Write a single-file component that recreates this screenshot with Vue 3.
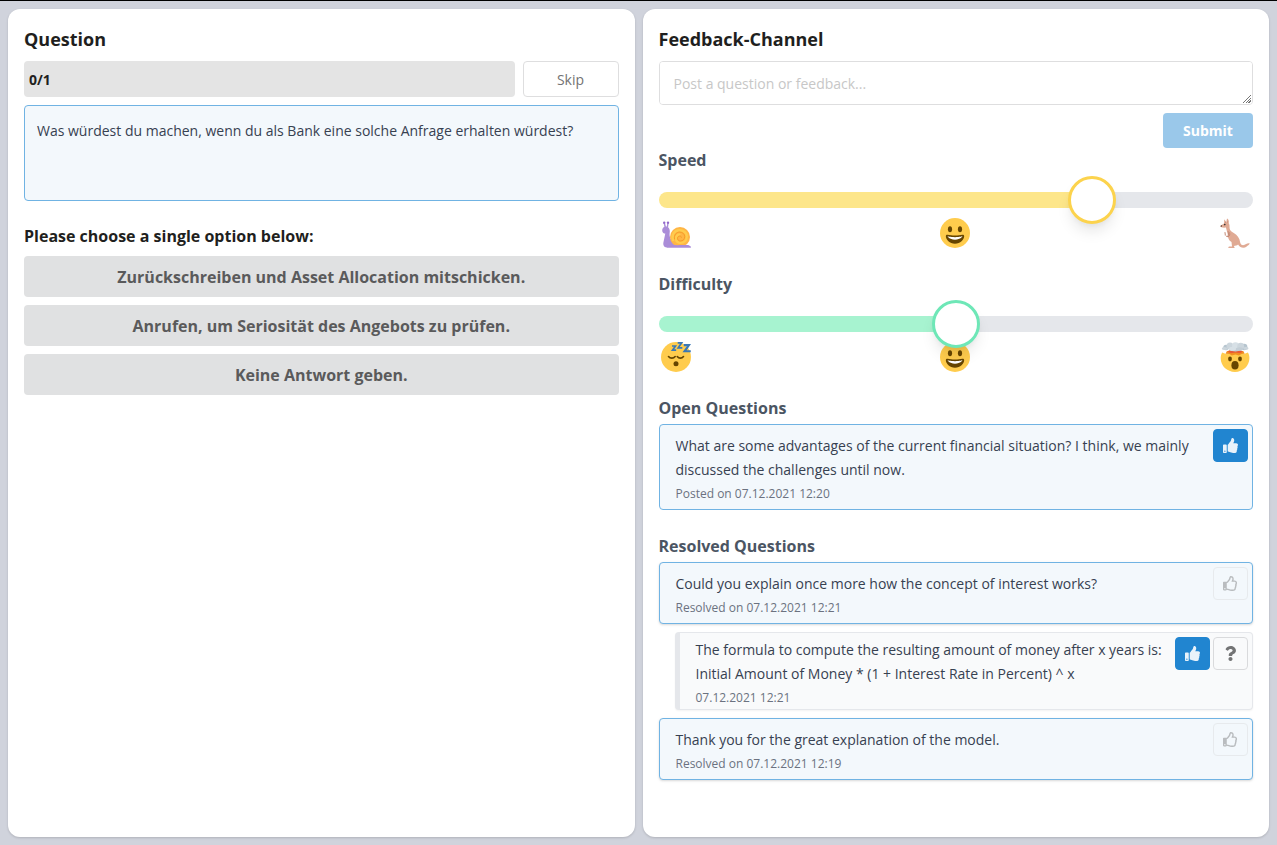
<script setup>
import { ref, computed } from 'vue'

const options = [
  'Zurückschreiben und Asset Allocation mitschicken.',
  'Anrufen, um Seriosität des Angebots zu prüfen.',
  'Keine Antwort geben.',
]

const feedback = ref('')
const speed = ref(75)
const difficulty = ref(50)
const speedStyle = computed(() => ({ '--ratio': speed.value / 100 }))
const difficultyStyle = computed(() => ({ '--ratio': difficulty.value / 100 }))

const thumbSolid =
  'M104 224H24c-13.255 0-24 10.745-24 24v240c0 13.255 10.745 24 24 24h80c13.255 0 24-10.745 24-24V248c0-13.255-10.745-24-24-24zM64 472c-13.255 0-24-10.745-24-24s10.745-24 24-24 24 10.745 24 24-10.745 24-24 24zM384 81.452c0 42.416-25.97 66.208-33.277 94.548h101.723c33.397 0 59.397 27.746 59.553 58.098.084 17.938-7.546 37.249-19.439 49.197l-.11.11c9.836 23.337 8.237 56.037-9.308 79.469 8.681 25.895-.069 57.704-16.382 74.757 4.298 17.598 2.244 32.575-6.148 44.632C440.202 511.587 389.616 512 346.839 512l-2.845-.001c-48.287-.017-87.806-17.598-119.56-31.725-15.957-7.099-36.821-15.887-52.651-16.178-6.54-.12-11.783-5.457-11.783-11.998v-213.77c0-3.2 1.282-6.271 3.558-8.521 39.614-39.144 56.648-80.587 89.117-113.111 14.804-14.832 20.188-37.236 25.393-58.902C282.515 39.293 291.817 0 312 0c24 0 72 8 72 81.452z'
const thumbOutline =
  'M466.27 286.69C475.04 271.84 480 256 480 236.85c0-44.015-37.218-85.58-85.82-85.58H357.7c4.92-12.81 8.85-28.13 8.85-46.54C366.55 31.936 328.86 0 271.28 0c-61.607 0-58.093 94.933-71.76 108.6-22.747 22.747-49.615 66.447-68.76 83.4H32c-17.673 0-32 14.327-32 32v240c0 17.673 14.327 32 32 32h64c14.893 0 27.408-10.174 30.978-23.95 44.509 1.001 75.06 39.94 177.802 39.94 7.22 0 15.22.01 22.22.01 77.117 0 111.986-39.423 112.94-95.33 13.319-18.425 20.299-43.122 17.34-66.99 9.854-18.452 13.664-40.343 8.99-62.99zm-61.75 53.83c12.56 21.13 1.26 49.41-13.94 57.57 7.7 48.78-17.608 65.9-53.12 65.9h-37.82c-71.639 0-118.029-37.82-171.64-37.82V240h10.92c28.36 0 67.98-70.89 94.54-97.46 28.36-28.36 18.91-75.63 37.82-94.54 47.27 0 47.27 32.98 47.27 56.73 0 39.17-28.36 56.72-28.36 94.54h103.99c21.11 0 37.73 18.91 37.82 37.82.09 18.9-12.82 37.81-22.27 37.81 13.489 14.555 16.371 45.236-5.21 65.62zM88 432c0 13.255-10.745 24-24 24s-24-10.745-24-24 10.745-24 24-24 24 10.745 24 24z'
const questionMark =
  'M202.021 0C122.202 0 70.503 32.703 29.914 91.026c-7.363 10.58-5.093 25.086 5.178 32.874l43.138 32.709c10.373 7.865 25.132 6.026 33.253-4.148 25.049-31.381 43.63-49.449 82.757-49.449 30.764 0 68.816 19.799 68.816 49.631 0 22.552-18.617 34.134-48.993 51.164-35.423 19.86-82.299 44.576-82.299 106.405V320c0 13.255 10.745 24 24 24h72.471c13.255 0 24-10.745 24-24v-5.773c0-42.86 125.268-44.645 125.268-160.627C377.504 66.256 286.902 0 202.021 0zM192 373.459c-38.196 0-69.271 31.075-69.271 69.271 0 38.195 31.075 69.27 69.271 69.27s69.271-31.075 69.271-69.271-31.075-69.27-69.271-69.27z'
</script>

<template>
  <div class="page">
    <main class="panel">
      <h1 class="title">Question</h1>
      <div class="status">
        <div class="progress">0/1</div>
        <button type="button" class="skip">Skip</button>
      </div>
      <div class="prompt">
        Was würdest du machen, wenn du als Bank eine solche Anfrage erhalten würdest?
      </div>
      <h2 class="choose">Please choose a single option below:</h2>
      <div class="options">
        <button v-for="option in options" :key="option" type="button" class="option">
          {{ option }}
        </button>
      </div>
    </main>

    <aside class="panel">
      <h1 class="title">Feedback-Channel</h1>
      <form class="form" @submit.prevent>
        <textarea
          v-model="feedback"
          class="field"
          rows="1"
          aria-label="Feedback"
          placeholder="Post a question or feedback..."
        ></textarea>
        <button type="submit" class="submit" :disabled="!feedback">Submit</button>
      </form>

      <section class="rating">
        <label class="heading" for="speed">Speed</label>
        <input id="speed" v-model.number="speed" class="range yellow" type="range" min="0" max="100" :style="speedStyle" />
        <div class="emojis">
          <svg class="emoji" viewBox="0 0 30 30" aria-hidden="true">
            <path fill="#aa8dd8" d="M1.2 12.2c0-2 1.300-3 2.200-3.500L2.700 5.600h1.400l.8 2.900h.9l.4-2.900h1.400l-.5 3.700c1.700 1.300 2 3.600 1.500 6.300-.6 3.800 2.700 10.300 8 10.900l9.500.4c2 .3 3.400 1.100 3.800 2.500H5.700c-2.700 0-3.900-2.300-3.200-5.300l1.800-8.500c-1.800 0-3.100-1.200-3.100-3.400z" />
            <circle cx="3.200" cy="4.800" r="1.200" fill="#9268ca" />
            <circle cx="7" cy="4.800" r="1.200" fill="#9268ca" />
            <circle cx="19" cy="19" r="10" fill="#ffb545" />
            <path fill="none" stroke="#ffcc4d" stroke-width="2.400" stroke-linecap="round" d="M11.900 22c-1.500-5.500 1.900-9.800 6.800-9.800 4.300 0 7.100 2.900 7.100 6.300 0 3.900-2.900 6.300-6.100 6.300-3 0-4.900-2-4.900-4.300 0-2.300 1.700-3.800 3.600-3.800" />
            <path fill="none" stroke="#f79d27" stroke-width="1" stroke-linecap="round" d="M13.500 21c-.8-3.900 1.700-6.900 5.200-6.900 3 0 5 2 5 4.600 0 2.700-2 4.300-4.200 4.300-1.900 0-3-1.300-3-2.700 0-1.400 1.100-2.300 2.300-2.300 1 0 1.600.6 1.600 1.400" />
            <path fill="#aa8dd8" d="M5 23.500c4 4 10 3.800 16 3.500 5-.1 8.700.5 9 2.500H6z" />
          </svg>
          <svg class="emoji" viewBox="0 0 36 36" aria-hidden="true">
            <circle cx="18" cy="18" r="18" fill="#ffcc4d" />
            <path fill="#664500" d="M18 21c-3.623 0-6.027-.422-9-1-.679-.131-2 0-2 2 0 4 4.595 9 11 9 6.404 0 11-5 11-9 0-2-1.321-2.132-2-2-2.973.578-5.377 1-9 1z" />
            <path fill="#fff" d="M9 22s3 1 9 1 9-1 9-1-2 4-9 4-9-4-9-4z" />
            <ellipse cx="12" cy="13.500" rx="2.500" ry="3.500" fill="#664500" />
            <ellipse cx="24" cy="13.500" rx="2.500" ry="3.500" fill="#664500" />
          </svg>
          <svg class="emoji" viewBox="0 0 30 30" aria-hidden="true">
            <path fill="#e0aa94" d="M4.300 1.200 6.200 4.400 7 .5c1.700.9 2.200 2.900 1.600 4.500 1.200 1.500.9 3.600 1 5.300.2 2.200 1.900 3.300 4.200 4.700 3.600 2.200 5.900 5.500 6.200 8.700.4 2.800 2.200 3.900 4 3.400 1.800-.5 2.500-2.100 5.700-1.800-.6 1.800-2 2.300-3 3.200-2.600 2.100-6.500 1.600-8.600-2-1.200 1-2.800 1.300-4.200 1.500l.8 2H8.500c-.5-.9.300-1.300 1.300-1.400l2.200-.2-.5-4.300C8.700 22.800 7.900 20 7.800 16.500L5.900 9.600c-1.500.2-3.700.2-5-.6-.6-.4-.6-1 0-1.500L4 5.500c.3-1.200 0-2.800.3-4.300z" />
            <path fill="none" stroke="#c48a76" stroke-width="1" stroke-linecap="round" d="M8.200 13.500c.4 2 .8 3.300-.5 4.700M9.300 14.500c1 1.800.4 3.400-1.200 4.300l-1.600-.5M5 14.500l.3 2.700" />
            <path fill="#66483e" d="M.5 8.100c.2-.7 1-.9 1.600-.6L1.900 8.800H.8z" />
            <circle cx="4.800" cy="6.600" r=".8" fill="#292f33" />
            <path fill="#bf7968" d="M5.100 2.500 6 4.800h-.8zM7.900 2.200l.2 2.200-.6.3z" />
          </svg>
        </div>
      </section>

      <section class="rating">
        <label class="heading" for="difficulty">Difficulty</label>
        <input id="difficulty" v-model.number="difficulty" class="range green" type="range" min="0" max="100" :style="difficultyStyle" />
        <div class="emojis">
          <svg class="emoji" viewBox="0 0 36 36" aria-hidden="true">
            <circle cx="18" cy="18" r="18" fill="#ffcc4d" />
            <circle cx="18" cy="26" r="3" fill="#664500" />
            <path fill="none" stroke="#664500" stroke-width="2" stroke-linecap="round" d="M9 17.500c2 2.500 6 2.500 8 0M19.500 17.500c2 2.500 5.500 2.500 7.500 0" />
            <path fill="none" stroke="#3b78b5" stroke-width="2" d="M13.200 4.800h4.200l-3.600 5h4.400M20 1h4.800l-4.200 6h5" />
            <path fill="none" stroke="#3b78b5" stroke-width="2.600" d="M27.300 3.800h6.200l-5.200 7.300h7.400" />
          </svg>
          <svg class="emoji" viewBox="0 0 36 36" aria-hidden="true">
            <circle cx="18" cy="18" r="18" fill="#ffcc4d" />
            <path fill="#664500" d="M18 21c-3.623 0-6.027-.422-9-1-.679-.131-2 0-2 2 0 4 4.595 9 11 9 6.404 0 11-5 11-9 0-2-1.321-2.132-2-2-2.973.578-5.377 1-9 1z" />
            <path fill="#fff" d="M9 22s3 1 9 1 9-1 9-1-2 4-9 4-9-4-9-4z" />
            <ellipse cx="12" cy="13.500" rx="2.500" ry="3.500" fill="#664500" />
            <ellipse cx="24" cy="13.500" rx="2.500" ry="3.500" fill="#664500" />
          </svg>
          <svg class="emoji" viewBox="0 0 30 30" aria-hidden="true">
            <path fill="#ffcc4d" d="M2.200 10.500 6 12h18l3.900-1.500c1 1.600 1.500 3.500 1.500 5.500C29.400 24 23 29.900 15 29.900S.7 24 .7 16c0-2 .5-3.900 1.500-5.500z" />
            <path fill="#f19020" d="m5.500 11.800 1.300-2.600L11 8h8l4.500 1.200 1.200 2.600-3.200.2-2.500 1.400-3.500-1-3.700 1-2.300-1.500z" />
            <path fill="#e75a35" d="M7.500 9.800 11 7.800h8l3.800 2-3.200 1.500-4-.7-4.500.7z" />
            <path fill="#c3ced6" d="M11 4h8l.8 4.800-4.300.8-5.300-.8z" />
            <circle cx="6" cy="5.500" r="2.700" fill="#b6c5cf" />
            <circle cx="24.200" cy="5" r="3.200" fill="#b6c5cf" />
            <circle cx="10" cy="4" r="3.500" fill="#ccd6dd" />
            <circle cx="15.500" cy="3.700" r="3.400" fill="#d7e0e6" />
            <circle cx="20.700" cy="4.200" r="3.400" fill="#ccd6dd" />
            <ellipse cx="12.500" cy="6.800" rx="3.600" ry="2" fill="#d7e0e6" />
            <ellipse cx="19.500" cy="7" rx="3.600" ry="1.800" fill="#c3ced6" />
            <ellipse cx="4.600" cy="6.500" rx="2.800" ry="1.600" fill="#ccd6dd" />
            <ellipse cx="26" cy="6.300" rx="2.500" ry="1.500" fill="#ccd6dd" />
            <ellipse cx="10" cy="17" rx="1.900" ry="2.400" fill="#664500" />
            <ellipse cx="20" cy="17" rx="1.900" ry="2.400" fill="#664500" />
            <ellipse cx="15" cy="23.200" rx="3.600" ry="4.300" fill="#664500" />
          </svg>
        </div>
      </section>

      <section class="questions">
        <h2 class="heading">Open Questions</h2>
        <article class="post">
          <div class="body">
            <p class="text">
              What are some advantages of the current financial situation? I think, we mainly
              discussed the challenges until now.
            </p>
            <p class="meta">Posted on 07.12.2021 12:20</p>
          </div>
          <button type="button" class="action active" aria-label="Upvote">
            <svg class="icon" viewBox="0 0 512 512"><path :d="thumbSolid" fill="currentColor" /></svg>
          </button>
        </article>
      </section>

      <section class="questions">
        <h2 class="heading">Resolved Questions</h2>
        <article class="post raised">
          <div class="body">
            <p class="text">Could you explain once more how the concept of interest works?</p>
            <p class="meta">Resolved on 07.12.2021 12:21</p>
          </div>
          <button type="button" class="action" disabled aria-label="Upvote">
            <svg class="icon" viewBox="0 0 512 512"><path :d="thumbOutline" fill="currentColor" /></svg>
          </button>
        </article>
        <article class="post reply">
          <div class="body">
            <p class="text">
              The formula to compute the resulting amount of money after x years is:<br />
              Initial Amount of Money * (1 + Interest Rate in Percent) ^ x
            </p>
            <p class="meta">07.12.2021 12:21</p>
          </div>
          <button type="button" class="action active" aria-label="Helpful">
            <svg class="icon" viewBox="0 0 512 512"><path :d="thumbSolid" fill="currentColor" /></svg>
          </button>
          <button type="button" class="action" aria-label="Unclear">
            <svg class="icon" viewBox="-64 0 512 512"><path :d="questionMark" fill="currentColor" /></svg>
          </button>
        </article>
        <article class="post raised">
          <div class="body">
            <p class="text">Thank you for the great explanation of the model.</p>
            <p class="meta">Resolved on 07.12.2021 12:19</p>
          </div>
          <button type="button" class="action" disabled aria-label="Upvote">
            <svg class="icon" viewBox="0 0 512 512"><path :d="thumbOutline" fill="currentColor" /></svg>
          </button>
        </article>
      </section>
    </aside>
  </div>
</template>

<style>
body {
  background: #d1d5db;
}
</style>

<style scoped>
.page {
  box-sizing: border-box;
  display: grid;
  grid-template-columns: 1fr 1fr;
  gap: 8px;
  min-height: 100vh;
  padding: 8px;
  border-top: 1px solid #000;
  background: #d0d3dc;
  color: #1f1f20;
  font: 14px/24px "Open Sans", "Noto Sans", sans-serif;
}
.page * {
  box-sizing: border-box;
}
.panel {
  padding: 16px;
  border-radius: 12px;
  background: #fff;
  box-shadow: 0 1px 3px rgba(0, 0, 0, 0.1), 0 1px 2px rgba(0, 0, 0, 0.06);
}
h1,
h2,
p {
  margin: 0;
}
button,
textarea {
  font: inherit;
}
.title {
  margin-bottom: 8px;
  font-size: 18px;
  font-weight: 700;
  line-height: 28px;
}
.status {
  display: flex;
  gap: 8px;
  margin-bottom: 8px;
}
.progress {
  flex: 1;
  padding: 7px 5px 5px;
  border-radius: 4px;
  background: #e4e4e4;
  font-weight: 700;
}
.skip {
  width: 96px;
  height: 36px;
  padding: 2px 0 0;
  border: 1px solid #dededf;
  border-radius: 4px;
  background: #fff;
  color: #737373;
}
.prompt {
  min-height: 96px;
  padding: 13px 12px 12px;
  border: 1px solid #70b3e3;
  border-radius: 4px;
  background: #f3f8fc;
  color: #374151;
}
.choose {
  margin: 23px 0 8px;
  font-size: 16px;
  line-height: 24px;
}
.options {
  display: grid;
  gap: 8px;
}
.option {
  min-height: 41px;
  padding: 8px 16px;
  border: 0;
  border-radius: 4px;
  background: #e0e1e2;
  color: #5a5a5b;
  font-size: 16px;
  font-weight: 700;
}
.form {
  display: flex;
  flex-direction: column;
  align-items: flex-end;
  gap: 8px;
}
.field {
  display: block;
  width: 100%;
  height: 44px;
  padding: 10px 14px;
  border: 1px solid #dededf;
  border-radius: 4px;
  outline: 0;
  resize: vertical;
}
.field::placeholder {
  color: #c7c7c7;
}
.field::-webkit-resizer {
  background:
    linear-gradient(135deg, #fff 50%, transparent 50%) 4px 4px / 10px 10px no-repeat,
    repeating-linear-gradient(135deg, #777 0 1px, #fff 1px 2px) 4px 4px / 10px 10px no-repeat;
}
.submit {
  width: 90px;
  height: 35px;
  padding: 0;
  border: 0;
  border-radius: 4px;
  background: #2185d0;
  color: #fff;
  font-weight: 700;
}
.submit:disabled {
  opacity: 0.45;
}
.heading {
  display: block;
  margin-bottom: 4px;
  color: #4b5563;
  font-size: 16px;
  font-weight: 700;
  line-height: 24px;
}
.rating {
  margin-bottom: 24px;
}
.range {
  position: relative;
  z-index: 1;
  display: block;
  width: 100%;
  height: 48px;
  margin: 0;
  appearance: none;
  background: transparent;
}
.range::-webkit-slider-runnable-track {
  height: 16px;
  border-radius: 8px;
  background: linear-gradient(var(--fill), var(--fill)) 0 0 / calc(24px + (100% - 48px) * var(--ratio)) 100% no-repeat #e5e7eb;
}
.range::-webkit-slider-thumb {
  width: 48px;
  height: 48px;
  margin-top: -16px;
  border: 3px solid var(--ring);
  border-radius: 50%;
  appearance: none;
  background: #fff;
  box-shadow: 0 10px 15px -3px rgba(0, 0, 0, 0.1), 0 4px 6px -2px rgba(0, 0, 0, 0.05);
}
.yellow {
  --fill: #fde68a;
  --ring: #fcd34d;
}
.green {
  --fill: #a7f3d0;
  --ring: #6ee7b7;
}
.emojis {
  display: flex;
  justify-content: space-between;
  margin-top: -6px;
  padding: 0 3px 0 2px;
}
.emoji {
  display: block;
  width: 30px;
  height: 30px;
}
.questions {
  margin-bottom: 24px;
}
.post {
  display: flex;
  align-items: flex-start;
  gap: 3px;
  padding: 4px;
  border: 1px solid #70b3e3;
  border-radius: 4px;
  background: #f3f8fc;
}
.post + .post {
  margin-top: 8px;
}
.raised {
  box-shadow: 0 1px 3px rgba(0, 0, 0, 0.1), 0 1px 2px rgba(0, 0, 0, 0.06);
}
.body {
  flex: 1;
  padding: 5px 8px 0 12px;
}
.text {
  color: #374151;
}
.meta {
  color: #6b7280;
  font-size: 12px;
  line-height: 23px;
}
.reply {
  margin-left: 16px;
  padding-bottom: 0;
  border-color: #e5e7eb;
  border-left-width: 5px;
  background: #f9fafb;
  box-shadow: 0 1px 2px rgba(0, 0, 0, 0.05);
}
.reply .body {
  padding-top: 1px;
  padding-right: 0;
}
.action {
  display: flex;
  flex: none;
  align-items: center;
  justify-content: center;
  width: 35px;
  height: 33px;
  padding: 0;
  border: 1px solid #d9dadc;
  border-radius: 4px;
  background: transparent;
  color: #737475;
}
.action:disabled {
  opacity: 0.45;
}
.active {
  border-color: #2185d0;
  background: #2185d0;
  color: #e8f2fa;
}
.icon {
  display: block;
  width: 15px;
  height: 15px;
}
</style>
